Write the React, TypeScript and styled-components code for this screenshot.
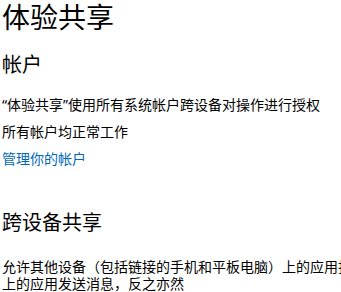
import React from "react";
import styled, { createGlobalStyle } from "styled-components";

const GlobalStyle = createGlobalStyle`
  html, body {
    margin: 0;
    padding: 0;
    background: #ffffff;
    overflow: hidden;
  }
  body {
    font-family: "Noto Sans", "Noto Sans CJK SC", sans-serif;
    color: #000000;
  }
`;

const Page = styled.div`
  display: flex;
  flex-direction: column;
  align-items: flex-start;
  padding: 0 0 0 2px;
  width: 600px;
`;

const Title = styled.h1`
  margin: 0;
  font-size: 28px;
  line-height: 34px;
  font-weight: 400;
`;

const SectionTitle = styled.h2<{ $gap: number }>`
  margin: ${(p) => p.$gap}px 0 0;
  font-size: 20px;
  line-height: 28px;
  font-weight: 400;
`;

const Text = styled.p<{ $gap: number }>`
  margin: ${(p) => p.$gap}px 0 0;
  font-size: 14px;
  line-height: 20px;
`;

const Link = styled.a`
  margin: 7px 0 0;
  font-size: 14px;
  line-height: 20px;
  color: #0067b8;
  text-decoration: none;
  cursor: pointer;
`;

const Paragraph = styled.p`
  margin: 21px 0 0;
  width: 540px;
  font-size: 14px;
  line-height: 17px;
`;

export default function App() {
  return (
    <>
      <GlobalStyle />
      <Page>
        <Title>体验共享</Title>
        <SectionTitle $gap={17}>帐户</SectionTitle>
        <Text $gap={16}>“体验共享”使用所有系统帐户跨设备对操作进行授权</Text>
        <Text $gap={7}>所有帐户均正常工作</Text>
        <Link>管理你的帐户</Link>
        <SectionTitle $gap={40}>跨设备共享</SectionTitle>
        <Paragraph>
          允许其他设备（包括链接的手机和平板电脑）上的应用打开此设备上的应用并向此设备上的应用发送消息，反之亦然
        </Paragraph>
      </Page>
    </>
  );
}
